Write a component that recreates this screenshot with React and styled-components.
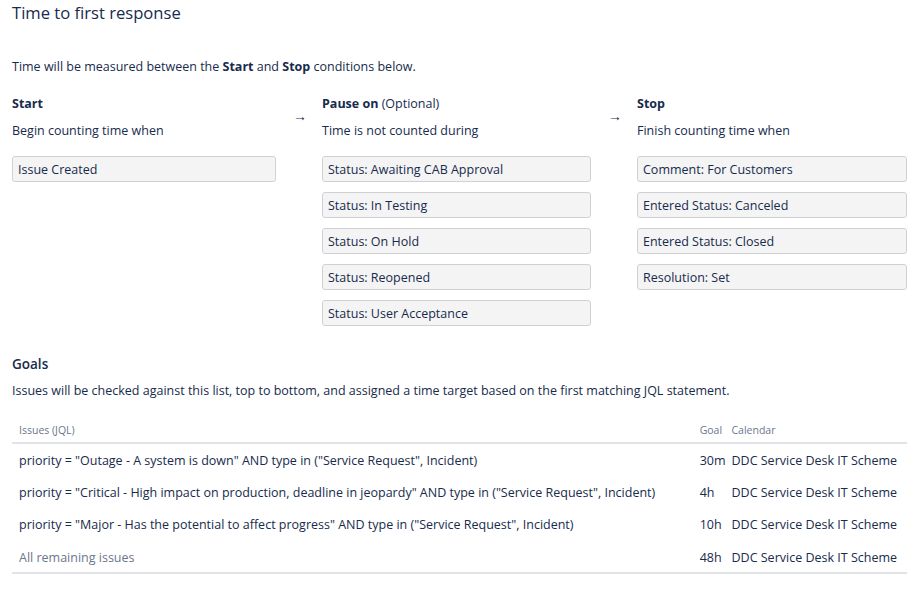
import React from "react";
import styled, { createGlobalStyle } from "styled-components";

const Global = createGlobalStyle`
  html, body { margin: 0; padding: 0; background: #fff; }
  body { font-family: "Open Sans", "Noto Sans", sans-serif; color: #172b4d; font-size: 12.5px; }
`;

const Page = styled.div`
  padding: 0 16px 0 12px;
  width: 923px;
  box-sizing: border-box;
`;

const Title = styled.h1`
  margin: 0;
  padding-top: 1px;
  font-size: 16.6px;
  font-weight: 400;
  line-height: 24px;
  color: #172b4d;
`;

const Intro = styled.p`
  margin: 32px 0 0;
  line-height: 20px;
`;

const Flow = styled.div`
  display: grid;
  grid-template-columns: 264px 46px 269px 46px 270px;
  margin-top: 17px;
`;

const Column = styled.div`
  display: flex;
  flex-direction: column;
`;

const ColHead = styled.div`
  line-height: 20px;
  b { font-weight: 700; }
`;

const ColSub = styled.div`
  margin-top: 7px;
  line-height: 20px;
`;

const Conditions = styled.div`
  display: flex;
  flex-direction: column;
  gap: 10px;
  margin-top: 15px;
`;

const Condition = styled.div`
  height: 26px;
  box-sizing: border-box;
  border: 1px solid #cfd1d4;
  border-radius: 3px;
  background: #f4f4f4;
  padding: 0 5px;
  display: flex;
  align-items: center;
`;

const Arrow = styled.div`
  display: flex;
  justify-content: center;
  padding: 12px 0 0 2px;
  font-size: 14px;
  line-height: 20px;
  color: #172b4d;
`;

const Section = styled.h2`
  margin: 28px 0 0;
  font-size: 13.5px;
  font-weight: 600;
  line-height: 20px;
`;

const Desc = styled.p`
  margin: 7px 0 0;
  line-height: 20px;
`;

const Table = styled.table`
  width: 100%;
  border-collapse: collapse;
  margin-top: 18px;
`;

const Th = styled.th`
  text-align: left;
  font-weight: 400;
  font-size: 10.5px;
  color: #6b778c;
  padding: 3px 7px 4px 7px;
  border-bottom: 2px solid #e1e3e6;
  line-height: 16px;
  white-space: nowrap;
  &:nth-child(2), &:nth-child(3) { padding-left: 0; padding-right: 4px; }
`;

const Td = styled.td`
  padding: 6px 7px;
  line-height: 20px;
  white-space: nowrap;
  color: ${(p) => (p.$muted ? "#6b778c" : "#172b4d")};
  &:nth-child(2), &:nth-child(3) { padding-left: 0; padding-right: 6px; }
  &:nth-child(3) { padding-right: 10px; width: 1%; }
  &:nth-child(2) { width: 1%; }
`;

const Tr = styled.tr`
  border-bottom: ${(p) => (p.$last ? "2px solid #e1e3e6" : "none")};
  & > td {
    padding-top: ${(p) => (p.$last ? "8px" : "7px")};
    padding-bottom: ${(p) => (p.$last ? "4px" : "5px")};
  }
`;

const start = ["Issue Created"];
const pause = [
  "Status: Awaiting CAB Approval",
  "Status: In Testing",
  "Status: On Hold",
  "Status: Reopened",
  "Status: User Acceptance",
];
const stop = [
  "Comment: For Customers",
  "Entered Status: Canceled",
  "Entered Status: Closed",
  "Resolution: Set",
];

const goals = [
  ['priority = "Outage - A system is down" AND type in ("Service Request", Incident)', "30m"],
  ['priority = "Critical - High impact on production, deadline in jeopardy" AND type in ("Service Request", Incident)', "4h"],
  ['priority = "Major - Has the potential to affect progress" AND type in ("Service Request", Incident)', "10h"],
];

const Col = ({ head, sub, items }) => (
  <Column>
    <ColHead>{head}</ColHead>
    <ColSub>{sub}</ColSub>
    <Conditions>
      {items.map((i) => (
        <Condition key={i}>{i}</Condition>
      ))}
    </Conditions>
  </Column>
);

export default function App() {
  return (
    <Page>
      <Global />
      <Title>Time to first response</Title>
      <Intro>
        Time will be measured between the <b>Start</b> and <b>Stop</b> conditions below.
      </Intro>
      <Flow>
        <Col head={<b>Start</b>} sub="Begin counting time when" items={start} />
        <Arrow>→</Arrow>
        <Col head={<><b>Pause on</b> (Optional)</>} sub="Time is not counted during" items={pause} />
        <Arrow>→</Arrow>
        <Col head={<b>Stop</b>} sub="Finish counting time when" items={stop} />
      </Flow>
      <Section>Goals</Section>
      <Desc>
        Issues will be checked against this list, top to bottom, and assigned a time target based on the first matching JQL statement.
      </Desc>
      <Table>
        <thead>
          <tr>
            <Th>Issues (JQL)</Th>
            <Th>Goal</Th>
            <Th>Calendar</Th>
          </tr>
        </thead>
        <tbody>
          {goals.map(([q, g]) => (
            <Tr key={q}>
              <Td>{q}</Td>
              <Td>{g}</Td>
              <Td>DDC Service Desk IT Scheme</Td>
            </Tr>
          ))}
          <Tr $last>
            <Td $muted>All remaining issues</Td>
            <Td>48h</Td>
            <Td>DDC Service Desk IT Scheme</Td>
          </Tr>
        </tbody>
      </Table>
    </Page>
  );
}
